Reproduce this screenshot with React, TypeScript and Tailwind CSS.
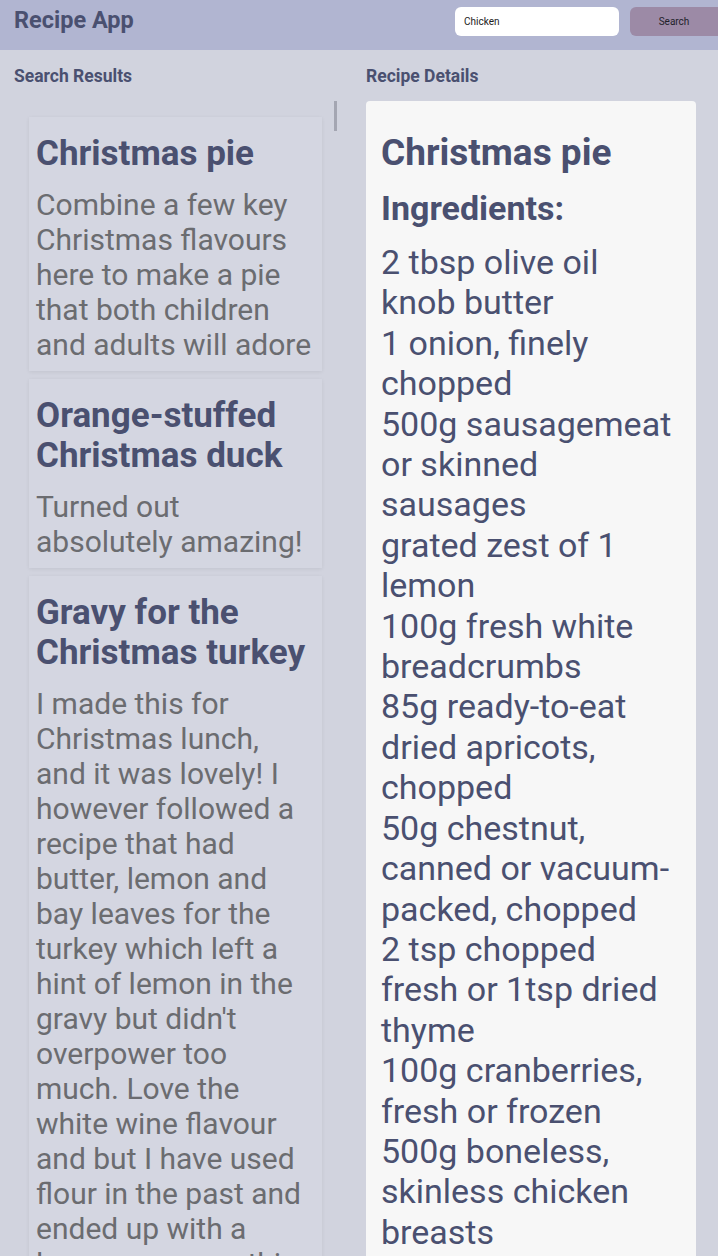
import React from "react";

const results = [
  {
    title: "Christmas pie",
    text: "Combine a few key Christmas flavours here to make a pie that both children and adults will adore",
  },
  {
    title: "Orange-stuffed Christmas duck",
    text: "Turned out absolutely amazing!",
  },
  {
    title: "Gravy for the Christmas turkey",
    text: "I made this for Christmas lunch, and it was lovely! I however followed a recipe that had butter, lemon and bay leaves for the turkey which left a hint of lemon in the gravy but didn't overpower too much. Love the white wine flavour and but I have used flour in the past and ended up with a lumpy gravy, so this was a great alternative.",
  },
];

const ingredients = [
  "2 tbsp olive oil",
  "knob butter",
  "1 onion, finely chopped",
  "500g sausagemeat or skinned sausages",
  "grated zest of 1 lemon",
  "100g fresh white breadcrumbs",
  "85g ready-to-eat dried apricots, chopped",
  "50g chestnut, canned or vacuum-packed, chopped",
  "2 tsp chopped fresh or 1tsp dried thyme",
  "100g cranberries, fresh or frozen",
  "500g boneless, skinless chicken breasts",
  "500g pack ready-rolled puff pastry",
  "beaten egg, to glaze",
];

export default function App() {
  return (
    <div className="h-[1256px] overflow-hidden bg-[#d1d3de] font-['Roboto',sans-serif]">
      <header className="h-[50px] bg-[#b1b5d1] flex items-start pt-[7px] pl-[14px]">
        <h1 className="text-[23.5px] leading-[26px] font-bold text-[#4a5070]">Recipe App</h1>
        <div className="ml-auto flex items-center gap-[11px]">
          <input
            readOnly
            value="Chicken"
            className="w-[164px] h-[29px] rounded-[6px] bg-white px-[9px] text-[10px] text-[#222] outline-none"
          />
          <button className="w-[88px] h-[29px] rounded-l-[6px] bg-[#9c8aa6] text-[10px] text-[#1f1f2a]">
            Search
          </button>
        </div>
      </header>

      <div className="flex pl-[14px]">
        <div className="w-[324px] shrink-0">
          <h2 className="mt-[14px] text-[17.5px] leading-[24px] font-bold text-[#4a5070]">Search Results</h2>
          <div className="relative mt-[13px] pl-[15px] pr-[16px] pt-[16px]">
            <div className="absolute right-[1px] top-0 w-[3px] h-[30px] bg-[#a4a6b2]" />
            <div className="flex flex-col gap-[8px]">
              {results.map((r, i) => (
                <div
                  key={i}
                  className="bg-[#d4d6e1] pl-[7px] pr-[9px] pt-[17px] pb-[9px] shadow-[0_1px_4px_rgba(0,0,0,0.07)]"
                >
                  <h3 className="text-[35px] leading-[40px] font-bold text-[#4a5070]">{r.title}</h3>
                  <p className="mt-[13px] text-[30px] leading-[35px] text-[#6b6c70]">{r.text}</p>
                </div>
              ))}
            </div>
          </div>
        </div>

        <div className="w-[330px] shrink-0 ml-[28px]">
          <h2 className="mt-[14px] text-[17.5px] leading-[24px] font-bold text-[#4a5070]">Recipe Details</h2>
          <div className="mt-[13px] rounded-[4px] bg-[#f7f7f7] pl-[15px] pr-[21px] pt-[32px] pb-[20px] text-[#4a5070]">
            <h3 className="text-[37px] leading-[40px] font-bold">Christmas pie</h3>
            <h4 className="mt-[16px] text-[34px] leading-[38px] font-bold">Ingredients:</h4>
            <ul className="mt-[15px]">
              {ingredients.map((item, i) => (
                <li key={i} className="text-[34px] leading-[40.4px]">
                  {item}
                </li>
              ))}
            </ul>
          </div>
        </div>
      </div>
    </div>
  );
}
